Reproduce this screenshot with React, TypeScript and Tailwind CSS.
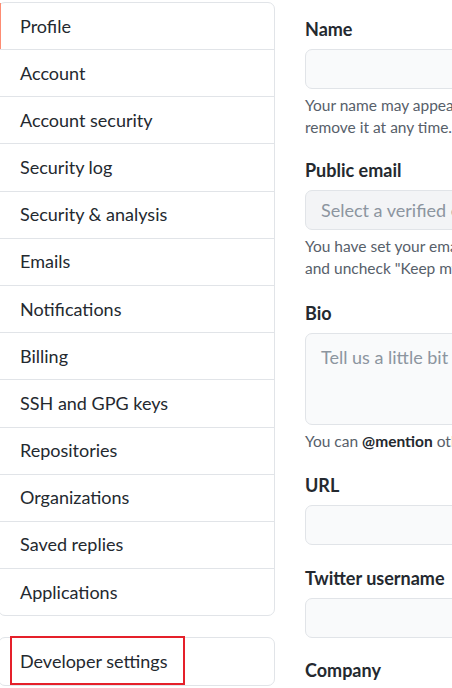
import React from 'react';

const items = [
  'Profile',
  'Account',
  'Account security',
  'Security log',
  'Security & analysis',
  'Emails',
  'Notifications',
  'Billing',
  'SSH and GPG keys',
  'Repositories',
  'Organizations',
  'Saved replies',
  'Applications',
];

const font = { fontFamily: 'Lato, "Noto Sans", Arial, sans-serif' };

// Sidebar menu row
const MenuItem = ({ label, active, first }: { label: string; active?: boolean; first?: boolean }) => (
  <div
    className={`relative flex items-center pl-[21px] pr-[20px] text-[18px] text-[#24292f] ${
      first ? 'h-[46px]' : 'h-[47.2px] border-t border-[#e1e4e8]'
    }`}
  >
    {active && <span className="absolute left-0 top-0 bottom-0 w-[2px] bg-[#fd8c73]" />}
    {label}
  </div>
);

const Label = ({ children }: { children: React.ReactNode }) => (
  <div className="h-[26px] text-[18px] font-bold leading-[26px] text-[#24292f]">{children}</div>
);

const Input = ({ placeholder, tall, muted }: { placeholder?: string; tall?: boolean; muted?: boolean }) => (
  <div
    className={`mt-[7px] w-[400px] rounded-[7px] border border-[#e1e4e8] px-[15px] text-[18px] text-[#8c959f] ${
      tall ? 'h-[92px] pt-[10px]' : 'flex h-[40px] items-center'
    } ${muted ? 'bg-[#f3f4f6]' : 'bg-[#f9fafb]'}`}
  >
    {placeholder}
  </div>
);

const Help = ({ lines }: { lines: React.ReactNode[] }) => (
  <div className="mt-[5px] whitespace-nowrap text-[15.5px] leading-[22px] text-[#57606a]">
    {lines.map((l, i) => (
      <div key={i}>{l}</div>
    ))}
  </div>
);

export default function App() {
  return (
    <div className="h-[688px] w-[452px] overflow-hidden bg-white" style={font}>
      <div className="flex gap-[30px]">
        {/* Sidebar */}
        <div className="ml-[-2px] w-[277px] shrink-0 pt-[2px]">
          <div className="rounded-[7px] border border-[#e1e4e8]">
            {items.map((it, i) => (
              <MenuItem key={it} label={it} active={i === 0} first={i === 0} />
            ))}
          </div>
          <div className="relative mt-[21px] rounded-[7px] border border-[#e1e4e8]">
            <div className="flex h-[47px] items-center pl-[21px] text-[18px] text-[#24292f]">
              Developer settings
            </div>
            <div className="absolute left-[11px] top-[-2px] h-[49px] w-[175px] border-2 border-[#e5202a]" />
          </div>
        </div>

        {/* Profile form */}
        <div className="w-[420px] shrink-0 pt-[16px]">
          <Label>Name</Label>
          <Input />
          <Help lines={['Your name may appear around GitHub where you contribute or are mentioned. You can', 'remove it at any time.']} />

          <div className="mt-[19px]">
            <Label>Public email</Label>
            <Input placeholder="Select a verified email to display" muted />
            <Help
              lines={[
                'You have set your email address to private. To toggle email privacy, go to email settings',
                'and uncheck "Keep my email address private".',
              ]}
            />
          </div>

          <div className="mt-[21px]">
            <Label>Bio</Label>
            <Input placeholder="Tell us a little bit about yourself" tall />
            <Help
              lines={[
                <>
                  You can <span className="font-bold text-[#24292f]">@mention</span> other users and
                  organizations to link to them.
                </>,
              ]}
            />
          </div>

          <div className="mt-[20px]">
            <Label>URL</Label>
            <Input />
          </div>

          <div className="mt-[20px]">
            <Label>Twitter username</Label>
            <Input />
          </div>

          <div className="mt-[19px]">
            <Label>Company</Label>
          </div>
        </div>
      </div>
    </div>
  );
}
